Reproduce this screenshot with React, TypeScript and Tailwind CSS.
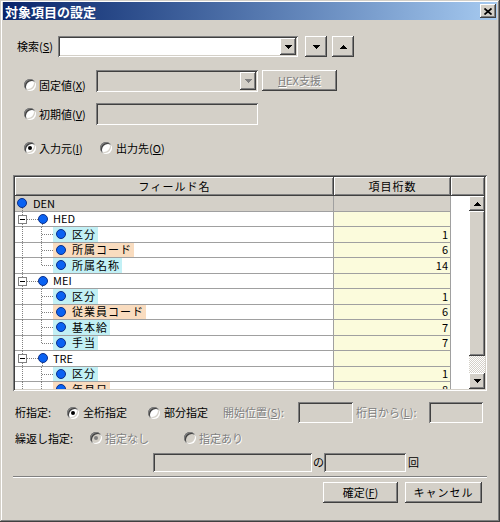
import React from 'react';

type Row = { t: string; lvl: 0 | 1 | 2; v?: string; hl?: 'c' | 'o'; last?: boolean };

const rows: Row[] = [
  { t: 'DEN', lvl: 0 },
  { t: 'HED', lvl: 1 },
  { t: '区分', lvl: 2, v: '1', hl: 'c' },
  { t: '所属コード', lvl: 2, v: '6', hl: 'o' },
  { t: '所属名称', lvl: 2, v: '14', hl: 'c', last: true },
  { t: 'MEI', lvl: 1 },
  { t: '区分', lvl: 2, v: '1', hl: 'c' },
  { t: '従業員コード', lvl: 2, v: '6', hl: 'o' },
  { t: '基本給', lvl: 2, v: '7', hl: 'c' },
  { t: '手当', lvl: 2, v: '7', hl: 'c', last: true },
  { t: 'TRE', lvl: 1 },
  { t: '区分', lvl: 2, v: '1', hl: 'c' },
  { t: '年月日', lvl: 2, v: '8', hl: 'o' },
];

const raised =
  'bg-[#d4d0c8] shadow-[inset_-1px_-1px_0_#404040,inset_1px_1px_0_#ffffff,inset_-2px_-2px_0_#808080,inset_2px_2px_0_#d4d0c8]';
const sunken =
  'shadow-[inset_1px_1px_0_#808080,inset_-1px_-1px_0_#ffffff,inset_2px_2px_0_#404040,inset_-2px_-2px_0_#d4d0c8]';
const dis = 'text-[#808080] [text-shadow:1px_1px_0_#ffffff]';

const Arrow = ({ up, gray }: { up?: boolean; gray?: boolean }) => (
  <svg width="7" height="4" viewBox="0 0 7 4" shapeRendering="crispEdges" className={gray ? 'fill-[#808080]' : 'fill-black'}>
    <path d={up ? 'M3 0h1v1h1v1h1v1h1v1H0V3h1V2h1V1h1z' : 'M0 0h7v1H6v1H5v1H4v1H3V3H2V2H1V1H0z'} />
  </svg>
);

const Radio = ({ on, off }: { on?: boolean; off?: boolean }) => (
  <span
    className={`flex w-3 h-3 shrink-0 items-center justify-center rounded-full ${off ? 'bg-[#d4d0c8]' : 'bg-white'} shadow-[inset_1px_1px_0_#808080,inset_-1px_-1px_0_#ffffff,inset_2px_2px_0_#404040,inset_-2px_-2px_0_#d4d0c8]`}
  >
    {on && <span className={`w-1 h-1 rounded-full ${off ? 'bg-[#808080]' : 'bg-black'}`} />}
  </span>
);

const Dot = () => <span className="w-[10px] h-[10px] shrink-0 rounded-full bg-[#0a62f2] border border-[#0b2f8a]" />;

const Guides = ({ r }: { r: Row }) => {
  const line = { stroke: '#808080', strokeDasharray: '1 1' };
  return (
    <svg className="absolute left-0 top-0 h-full w-[40px] overflow-visible" shapeRendering="crispEdges">
      {r.lvl === 0 && <line x1="7.5" y1="12" x2="7.5" y2="16" {...line} />}
      {r.lvl === 1 && (
        <>
          <line x1="7.5" y1="0" x2="7.5" y2="16" {...line} />
          <line x1="12" y1="7.5" x2="23" y2="7.5" {...line} />
          <line x1="27.5" y1="12" x2="27.5" y2="16" {...line} />
          <rect x="3.5" y="3.5" width="8" height="8" fill="#ffffff" stroke="#808080" />
          <line x1="5" y1="7.5" x2="10" y2="7.5" stroke="#000000" />
        </>
      )}
      {r.lvl === 2 && (
        <>
          <line x1="7.5" y1="0" x2="7.5" y2="16" {...line} />
          <line x1="26.5" y1="0" x2="26.5" y2={r.last ? 8 : 16} {...line} />
          <line x1="27" y1="7.5" x2="38" y2="7.5" {...line} />
        </>
      )}
    </svg>
  );
};

const TreeRow = ({ r }: { r: Row }) => (
  <div className="flex h-[15.5px] shrink-0 border-b border-[#a0a0a0]">
    <div className={`relative flex w-[319px] items-center border-r border-[#a0a0a0] ${r.lvl === 0 ? 'bg-[#d4d0c8]' : 'bg-white'}`}>
      <Guides r={r} />
      {r.lvl === 0 && (
        <>
          <span className="w-[2px]" />
          <Dot />
          <span className="ml-[6px]">{r.t}</span>
        </>
      )}
      {r.lvl === 1 && (
        <>
          <span className="w-[23px]" />
          <Dot />
          <span className="ml-[5px]">{r.t}</span>
        </>
      )}
      {r.lvl === 2 && (
        <>
          <span className="w-[38px] shrink-0" />
          <span className={`flex h-full items-center pl-[3px] pr-[2px] ${r.hl === 'o' ? 'bg-[#f9dcbf]' : 'bg-[#c2f0f5]'}`}>
            <Dot />
            <span className="ml-[6px] tracking-[1px]">{r.t}</span>
          </span>
        </>
      )}
    </div>
    <div className={`flex w-[117px] items-center justify-end border-r border-[#a0a0a0] pr-[2px] ${r.lvl === 0 ? 'bg-[#d4d0c8]' : 'bg-[#fbfbdc]'}`}>
      {r.v}
    </div>
  </div>
);

export default function App() {
  return (
    <div className="w-[500px] h-[522px] bg-[#d4d0c8] pt-[2px] px-[3px] font-['Noto_Sans_CJK_JP','Liberation_Sans',sans-serif] text-[11px] leading-none text-black shadow-[inset_-1px_-1px_0_#404040,inset_1px_1px_0_#d4d0c8,inset_-2px_-2px_0_#808080,inset_2px_2px_0_#ffffff]">
      {/* title bar */}
      <div className="flex h-[18px] items-center bg-linear-to-r from-[#0a246a] to-[#a6caf0] pl-[2px] pr-[1px]">
        <span className="text-[13px] font-bold text-white">対象項目の設定</span>
        <div className={`ml-auto flex w-[16px] h-[14px] items-center justify-center ${raised}`}>
          <svg width="8" height="7" viewBox="0 0 8 7">
            <path d="M0.5 0.5L7.5 6.5M7.5 0.5L0.5 6.5" stroke="#000000" strokeWidth="1.7" />
          </svg>
        </div>
      </div>

      <div className="flex flex-col pl-[10px]">
        {/* search */}
        <div className="mt-[16px] ml-[4px] flex h-[21px] items-center">
          <span className="w-[41px]">検索(<u>S</u>)</span>
          <div className={`flex w-[240px] h-full bg-white p-[2px] ${sunken}`}>
            <div className="flex-1" />
            <div className={`flex w-[16px] items-center justify-center ${raised}`}>
              <Arrow />
            </div>
          </div>
          <div className={`ml-[7px] flex w-[22px] h-full items-center justify-center ${raised}`}>
            <Arrow />
          </div>
          <div className={`ml-[5px] flex w-[22px] h-full items-center justify-center ${raised}`}>
            <Arrow up />
          </div>
        </div>

        {/* fixed value */}
        <div className="mt-[13px] ml-[11px] flex h-[22px] items-center">
          <span className="mt-[8px] flex items-center">
            <Radio />
            <span className="ml-[3px] w-[57px]">固定値(<u>X</u>)</span>
          </span>
          <div className={`flex w-[162px] h-full bg-[#d4d0c8] p-[2px] ${sunken}`}>
            <div className="flex-1" />
            <div className={`flex w-[16px] items-center justify-center ${raised}`}>
              <Arrow gray />
            </div>
          </div>
          <div className={`ml-[4px] flex w-[75px] h-[21px] items-center justify-center self-start ${raised} ${dis}`}>
            <span>
              <u>H</u>EX支援
            </span>
          </div>
        </div>

        {/* initial value */}
        <div className="mt-[11px] ml-[11px] flex h-[22px] items-center">
          <Radio />
          <span className="ml-[3px] w-[57px]">初期値(<u>V</u>)</span>
          <div className={`w-[162px] h-full bg-[#d4d0c8] ${sunken}`} />
        </div>

        {/* in / out */}
        <div className="mt-[17px] ml-[11px] flex h-[12px] items-center">
          <Radio on />
          <span className="ml-[3px] w-[61px]">入力元(<u>I</u>)</span>
          <Radio />
          <span className="ml-[4px]">出力先(<u>O</u>)</span>
        </div>

        {/* table */}
        <div className={`mt-[21px] flex w-[474px] h-[216px] flex-col bg-white p-[2px] ${sunken}`}>
          <div className="flex h-[19px] shrink-0">
            <div className={`flex w-[319px] items-center justify-center tracking-[1px] ${raised}`}>フィールド名</div>
            <div className={`flex w-[117px] items-center justify-center tracking-[1px] ${raised}`}>項目桁数</div>
            <div className={`flex-1 ${raised}`} />
          </div>
          <div className="flex min-h-0 flex-1">
            <div className="flex w-[436px] flex-col overflow-hidden">
              {rows.map((r, i) => (
                <TreeRow key={i} r={r} />
              ))}
            </div>
            <div className="flex-1 bg-white" />
            <div className="flex w-[16px] flex-col">
              <div className={`flex h-[15px] items-center justify-center ${raised}`}>
                <Arrow up />
              </div>
              <div className={`h-[145px] ${raised}`} />
              <div className="flex-1 bg-[image:repeating-conic-gradient(#ffffff_0_25%,#d4d0c8_0_50%)] bg-[length:2px_2px]" />
              <div className={`flex h-[16px] items-center justify-center ${raised}`}>
                <Arrow />
              </div>
            </div>
          </div>
        </div>

        {/* digit spec */}
        <div className="mt-[11px] ml-[2px] flex h-[21px] items-center">
          <span className="w-[52px]">桁指定:</span>
          <Radio on />
          <span className="ml-[4px] w-[65px]">全桁指定</span>
          <Radio />
          <span className="ml-[4px] w-[59px]">部分指定</span>
          <span className={`w-[75px] ${dis}`}>開始位置(<u>S</u>):</span>
          <div className={`w-[55px] h-full bg-[#d4d0c8] ${sunken}`} />
          <span className={`ml-[3px] w-[73px] ${dis}`}>桁目から(<u>L</u>):</span>
          <div className={`w-[54px] h-full bg-[#d4d0c8] ${sunken}`} />
        </div>

        {/* repeat spec */}
        <div className="mt-[7px] ml-[2px] flex h-[16px] items-center">
          <span className="w-[75px]">繰返し指定:</span>
          <Radio on off />
          <span className={`ml-[3px] w-[79px] ${dis}`}>指定なし</span>
          <Radio off />
          <span className={`ml-[3px] ${dis}`}>指定あり</span>
        </div>

        {/* count */}
        <div className="mt-[7px] ml-[140px] flex h-[19px] items-center">
          <div className={`w-[159px] h-full bg-[#d4d0c8] ${sunken}`} />
          <span className="ml-[1px] w-[11px]">の</span>
          <div className={`w-[82px] h-full bg-[#d4d0c8] ${sunken}`} />
          <span className="ml-[2px]">回</span>
        </div>

        <div className="mt-[4px] w-[474px] border-t border-b border-t-[#808080] border-b-white" />

        {/* buttons */}
        <div className="mt-[4px] flex w-[469px] justify-end gap-[7px]">
          <div className={`flex w-[75px] h-[21px] items-center justify-center ${raised}`}>
            確定(<u>F</u>)
          </div>
          <div className={`flex w-[77px] h-[21px] items-center justify-center tracking-[1px] ${raised}`}>キャンセル</div>
        </div>
      </div>
    </div>
  );
}
